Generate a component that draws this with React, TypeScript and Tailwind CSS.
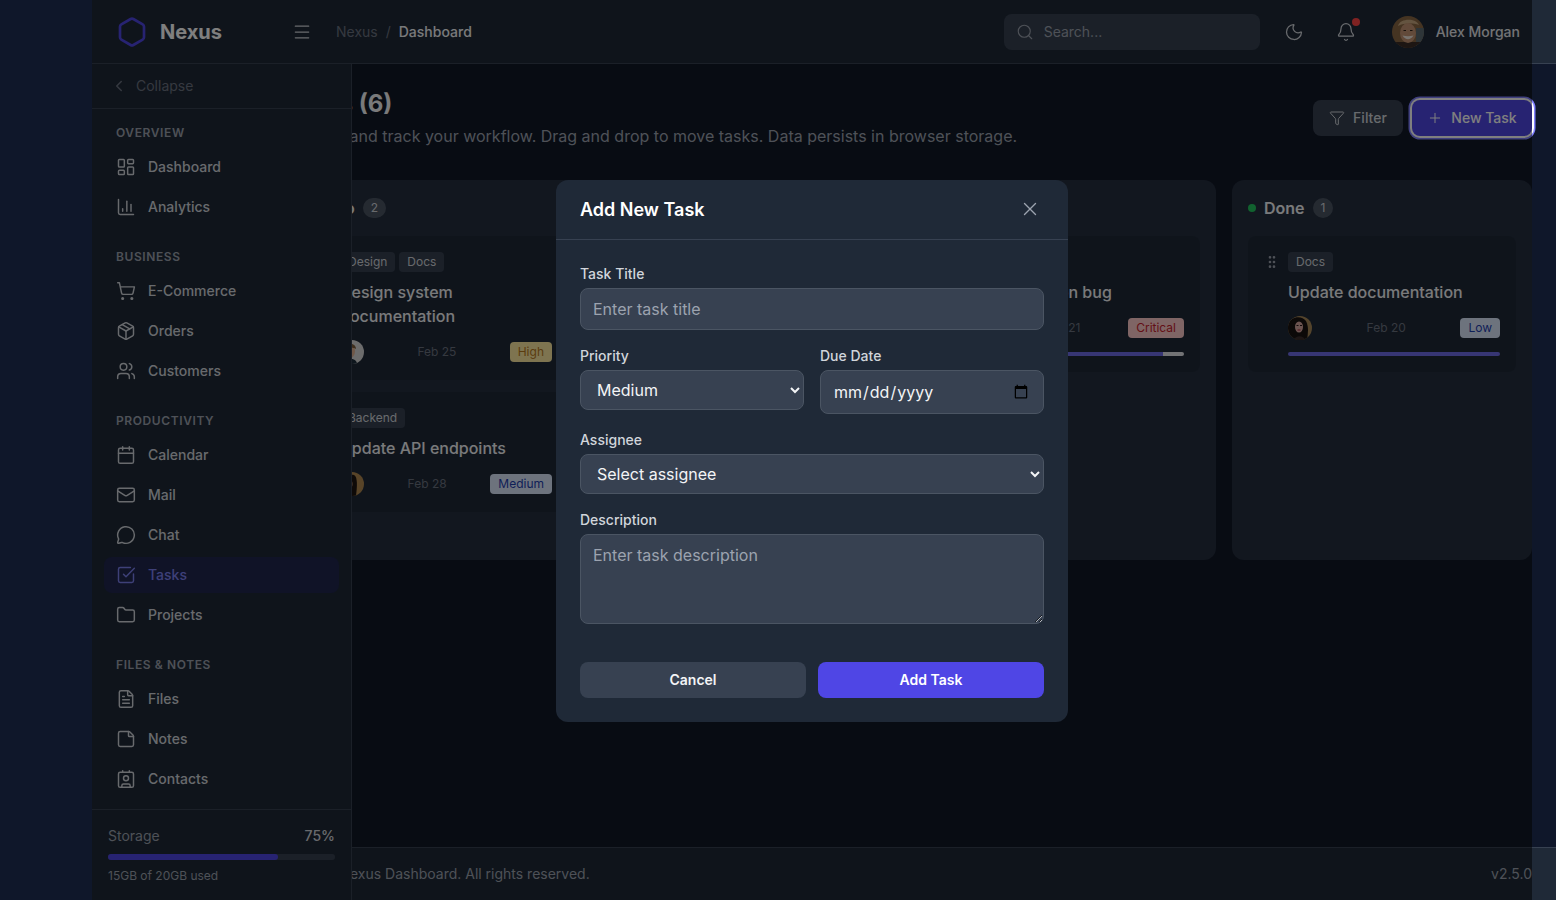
import { useState } from "react";
import {
  Bell,
  Calendar,
  ChartColumn,
  ChevronLeft,
  Contact,
  FileText,
  Folder,
  Funnel,
  GripVertical,
  Hexagon,
  LayoutDashboard,
  Mail,
  Menu,
  MessageCircle,
  Moon,
  Package,
  Plus,
  Search,
  ShoppingCart,
  SquareCheckBig,
  StickyNote,
  Users,
  X,
} from "lucide-react";

const navSections = [
  {
    title: "Overview",
    items: [
      { label: "Dashboard", icon: LayoutDashboard },
      { label: "Analytics", icon: ChartColumn },
    ],
  },
  {
    title: "Business",
    items: [
      { label: "E-Commerce", icon: ShoppingCart },
      { label: "Orders", icon: Package },
      { label: "Customers", icon: Users },
    ],
  },
  {
    title: "Productivity",
    items: [
      { label: "Calendar", icon: Calendar },
      { label: "Mail", icon: Mail },
      { label: "Chat", icon: MessageCircle },
      { label: "Tasks", icon: SquareCheckBig, active: true },
      { label: "Projects", icon: Folder },
    ],
  },
  {
    title: "Files & Notes",
    items: [
      { label: "Files", icon: FileText },
      { label: "Notes", icon: StickyNote },
      { label: "Contacts", icon: Contact },
    ],
  },
];

type Priority = "Low" | "Medium" | "High" | "Critical";

interface Task {
  title: string;
  tags: string[];
  date: string;
  priority: Priority;
  person: "man" | "woman" | "curly";
  progress?: number;
}

const priorityClass: Record<Priority, string> = {
  Low: "bg-[#dbe7fb] text-[#1e40af]",
  Medium: "bg-[#dbe7fb] text-[#1e40af]",
  High: "bg-[#fde9a0] text-[#b7791f]",
  Critical: "bg-[#fecaca] text-[#c81e2e]",
};

const columns: { title: string; dot: string; tasks: Task[] }[] = [
  {
    title: "Todo",
    dot: "bg-[#f59e0b]",
    tasks: [
      { title: "Design system documentation", tags: ["Design", "Docs"], date: "Feb 25", priority: "High", person: "man" },
      { title: "Update API endpoints", tags: ["Backend"], date: "Feb 28", priority: "Medium", person: "curly" },
    ],
  },
  {
    title: "In Progress",
    dot: "bg-[#6366f1]",
    tasks: [
      { title: "Build dashboard widgets", tags: ["Frontend"], date: "Feb 24", priority: "High", person: "man", progress: 60 },
    ],
  },
  {
    title: "Review",
    dot: "bg-[#ef4444]",
    tasks: [
      { title: "Fix navigation bug", tags: ["Bug"], date: "Feb 21", priority: "Critical", person: "man", progress: 90 },
    ],
  },
  {
    title: "Done",
    dot: "bg-[#22c55e]",
    tasks: [
      { title: "Update documentation", tags: ["Docs"], date: "Feb 20", priority: "Low", person: "woman", progress: 100 },
    ],
  },
];

function HostAvatar() {
  return (
    <svg viewBox="0 0 32 32" className="size-8 shrink-0 rounded-full">
      <rect width="32" height="32" fill="#8a6844" />
      <rect x="24" y="12" width="8" height="20" fill="#5c6a70" />
      <rect y="26" width="32" height="6" fill="#3a2c26" />
      <path d="M6 10C8 2 24 2 27 9c-6-2-15-2-21 1z" fill="#c8a880" />
      <ellipse cx="16" cy="17" rx="8" ry="10" fill="#c49474" />
      <path d="M10.5 19.5c3 5 8 5 11 0-4 1-7 1-11 0z" fill="#f0e6dc" />
      <path d="M11.5 14.5h2.5M18 14.5h2.5" stroke="#2e2018" strokeWidth="1.2" />
    </svg>
  );
}

function TaskAvatar({ person }: { person: Task["person"] }) {
  if (person === "man") {
    return (
      <svg viewBox="0 0 24 24" className="size-6 shrink-0 rounded-full">
        <rect width="24" height="24" fill="#d8d8d8" />
        <path d="M3 24c0-7 14-7 14 0z" fill="#1c2c3a" />
        <path d="M9 18h3l-1 6z" fill="#58a8c8" />
        <ellipse cx="10" cy="11" rx="5" ry="7" fill="#e0b090" />
        <path d="M4 9c0-7 12-7 12 0-3-2-9-2-12 0z" fill="#7a5a38" />
      </svg>
    );
  }
  if (person === "curly") {
    return (
      <svg viewBox="0 0 24 24" className="size-6 shrink-0 rounded-full">
        <rect width="24" height="24" fill="#b08850" />
        <path d="M3 24C0 8 8 1 14 3c4 2 3 12 2 21z" fill="#1c1410" />
        <ellipse cx="9" cy="12" rx="3.5" ry="5" fill="#c89878" />
      </svg>
    );
  }
  return (
    <svg viewBox="0 0 24 24" className="size-6 shrink-0 rounded-full">
      <rect width="24" height="24" fill="#a88858" />
      <path d="M0 24V8C3 0 14-1 18 5c3 6 2 13 1 19z" fill="#181210" />
      <ellipse cx="11" cy="11" rx="4" ry="5.5" fill="#d8a8a0" />
      <path d="M6 24c1-5 10-5 11 0z" fill="#3a2c2a" />
      <path d="M9.5 14h3" stroke="#a02838" strokeWidth="1" />
      <path d="M8.5 9.5h2M12 9.5h2" stroke="#281818" strokeWidth="1" />
    </svg>
  );
}

function TaskCard({ task }: { task: Task }) {
  return (
    <div className="flex gap-2 rounded-lg bg-[#1f2937] p-4">
      <GripVertical className="mt-0.5 size-4 shrink-0 text-[#9ca3af]" />
      <div className="min-w-0 flex-1">
        <div className="mb-2 flex gap-1">
          {task.tags.map((tag) => (
            <span key={tag} className="h-5 rounded bg-[#374151] px-2 text-xs leading-5 text-[#d1d5db]">
              {tag}
            </span>
          ))}
        </div>
        <p className="mb-3 text-base font-medium text-[#f3f4f6]">{task.title}</p>
        <div className="flex items-center justify-between">
          <TaskAvatar person={task.person} />
          <span className="text-xs text-[#6b7280]">{task.date}</span>
          <span className={`h-5 rounded px-2 text-xs leading-5 ${priorityClass[task.priority]}`}>{task.priority}</span>
        </div>
        {task.progress !== undefined && (
          <div className="mt-3 h-1 overflow-hidden rounded-sm bg-[#e5e7eb]">
            <div className="h-full bg-[#6f6ce8]" style={{ width: `${task.progress}%` }} />
          </div>
        )}
      </div>
    </div>
  );
}

function Sidebar() {
  return (
    <aside className="relative z-10 flex w-[260px] shrink-0 flex-col border-r border-[#374151] bg-[#1f2937]">
      <div className="flex h-[45px] items-center gap-2 border-b border-[#374151] pl-[18px] text-sm text-[#6b7280]">
        <ChevronLeft className="size-[18px]" strokeWidth={2} />
        <span>Collapse</span>
      </div>
      <nav className="flex-1 px-3 pt-[15px]">
        {navSections.map((section) => (
          <div key={section.title} className="mb-[23px] flex flex-col gap-1 last:mb-0">
            <h3 className="mb-[3px] px-3 text-xs leading-[18px] font-semibold tracking-[0.05em] text-[#9ca3af] uppercase">
              {section.title}
            </h3>
            {section.items.map((item) => {
              const Icon = item.icon;
              return (
                <a
                  key={item.label}
                  className={`flex h-9 items-center gap-3 rounded-lg px-3 text-sm font-medium ${
                    item.active ? "bg-[#20264e] text-[#7c80f0]" : "text-[#d1d5db]"
                  }`}
                >
                  <Icon className="size-5" strokeWidth={1.75} />
                  {item.label}
                </a>
              );
            })}
          </div>
        ))}
      </nav>
      <div className="border-t border-[#374151] p-4">
        <div className="mb-2 flex items-center justify-between text-sm">
          <span className="text-[#9ca3af]">Storage</span>
          <span className="font-medium text-[#d1d5db]">75%</span>
        </div>
        <div className="h-1.5 rounded-full bg-[#374151]">
          <div className="h-full w-3/4 rounded-full bg-[#4f46e5]" />
        </div>
        <p className="mt-2 text-xs text-[#9ca3af]">15GB of 20GB used</p>
      </div>
    </aside>
  );
}

function AddTaskModal() {
  const [title, setTitle] = useState("");
  const [description, setDescription] = useState("");
  const fieldClass = "w-full rounded-lg border border-[#4b5563] bg-[#374151] px-3 text-base text-[#f3f4f6] outline-none";

  return (
    <div className="w-[512px] rounded-xl bg-[#1f2937]">
      <div className="flex h-[60px] items-center justify-between border-b border-[#374151] pr-[27px] pl-6">
        <h2 className="text-lg font-semibold text-white">Add New Task</h2>
        <X className="mb-0.5 size-[22px] text-[#9ca3af]" strokeWidth={1.5} />
      </div>
      <form className="p-6">
        <label className="mb-1 block text-sm font-medium text-[#d1d5db]">Task Title</label>
        <input
          value={title}
          onChange={(e) => setTitle(e.target.value)}
          placeholder="Enter task title"
          className={`${fieldClass} mb-4 h-[42px] placeholder:text-[#9ca3af]`}
        />
        <div className="mb-4 grid grid-cols-2 items-start gap-4">
          <div>
            <label className="mb-1 block text-sm font-medium text-[#d1d5db]">Priority</label>
            <select defaultValue="Medium" className={`${fieldClass} h-10`}>
              <option>Low</option>
              <option>Medium</option>
              <option>High</option>
            </select>
          </div>
          <div>
            <label className="mb-1 block text-sm font-medium text-[#d1d5db]">Due Date</label>
            <input type="date" className={`${fieldClass} h-11`} />
          </div>
        </div>
        <label className="mb-1 block text-sm font-medium text-[#d1d5db]">Assignee</label>
        <select className={`${fieldClass} mb-4 h-10`}>
          <option>Select assignee</option>
        </select>
        <label className="mb-1 block text-sm font-medium text-[#d1d5db]">Description</label>
        <textarea
          value={description}
          onChange={(e) => setDescription(e.target.value)}
          placeholder="Enter task description"
          className={`${fieldClass} block h-[90px] py-2 placeholder:text-[#9ca3af]`}
        />
        <div className="mt-[38px] flex gap-3">
          <button type="button" className="h-9 flex-1 rounded-lg bg-[#374151] text-sm font-semibold text-[#f3f4f6]">
            Cancel
          </button>
          <button type="button" className="h-9 flex-1 rounded-lg bg-[#4f46e5] text-sm font-semibold text-white">
            Add Task
          </button>
        </div>
      </form>
    </div>
  );
}

export default function App() {
  return (
    <div className="flex h-[900px] w-[1556px] overflow-hidden bg-[#0f172a] font-['Inter',sans-serif]">
      <div className="w-[92px] shrink-0" />

      <div className="relative flex w-[1440px] shrink-0 flex-col bg-[#111827]">
        {/* header */}
        <header className="flex h-16 shrink-0 items-center border-b border-[#374151] bg-[#1f2937] pr-3">
          <div className="flex w-[200px] items-center gap-3 pl-6">
            <Hexagon className="size-8 text-[#4f46e5]" strokeWidth={2} />
            <span className="text-xl font-bold text-white">Nexus</span>
          </div>
          <Menu className="mr-6 size-5 text-[#d1d5db]" strokeWidth={1.5} />
          <div className="flex items-center gap-2 text-sm">
            <span className="text-[#6b7280]">Nexus</span>
            <span className="text-[#6b7280]">/</span>
            <span className="font-medium text-[#f3f4f6]">Dashboard</span>
          </div>
          <div className="ml-auto flex h-9 w-64 items-center gap-2 rounded-lg bg-[#374151] pl-3 text-sm text-[#9ca3af]">
            <Search className="size-[18px]" strokeWidth={1.5} />
            <span className="ml-0.5">Search...</span>
          </div>
          <Moon className="ml-6 size-5 text-[#d1d5db]" strokeWidth={1.5} />
          <div className="relative ml-8">
            <Bell className="size-5 text-[#d1d5db]" strokeWidth={1.5} />
            <span className="absolute -top-1 -right-1 size-2 rounded-full bg-[#ff4444]" />
          </div>
          <div className="ml-9 flex items-center gap-3">
            <HostAvatar />
            <span className="text-sm font-medium text-[#e5e7eb]">Alex Morgan</span>
          </div>
        </header>

        <div className="flex min-h-0 flex-1">
          <Sidebar />

          <div className="flex min-w-0 flex-1 flex-col">
            <main className="-ml-[92px] flex-1 pt-[26px] pl-6">
              <div className="mb-8 flex items-start justify-between">
                <div>
                  <h1 className="text-2xl leading-7 font-bold text-[#f3f4f6]">Tasks (6)</h1>
                  <p className="mt-1.5 text-base text-[#9ca3af]">
                    Manage and track your workflow. Drag and drop to move tasks. Data persists in browser storage.
                  </p>
                </div>
                <div className="mt-2.5 flex gap-[9px]">
                  <button className="flex h-9 w-[90px] items-center justify-center gap-2 rounded-lg bg-[#374151] text-sm font-medium text-[#d1d5db]">
                    <Funnel className="size-4" strokeWidth={1.5} />
                    Filter
                  </button>
                  <button className="flex h-9 w-[120px] items-center justify-center gap-2 rounded-lg bg-[#4f46e5] text-sm font-medium text-white shadow-[0_0_0_2px_#fff,0_0_0_3.5px_#8080ff]">
                    <Plus className="size-4" strokeWidth={1.5} />
                    New Task
                  </button>
                </div>
              </div>

              <div className="flex gap-4">
                {columns.map((column) => (
                  <section key={column.title} className="h-[380px] w-[300px] shrink-0 rounded-xl bg-[#242e3e] p-4">
                    <div className="mb-4 flex h-6 items-center gap-2">
                      <span className={`size-2 rounded-full ${column.dot}`} />
                      <h2 className="text-base font-semibold text-[#f3f4f6]">{column.title}</h2>
                      <span className="h-5 rounded-full bg-[#4b5563] px-2 text-xs leading-5 text-[#d1d5db]">
                        {column.tasks.length}
                      </span>
                    </div>
                    <div className="flex flex-col gap-3">
                      {column.tasks.map((task) => (
                        <TaskCard key={task.title} task={task} />
                      ))}
                    </div>
                  </section>
                ))}
              </div>
            </main>

            <footer className="-ml-[92px] flex h-[53px] shrink-0 items-center justify-between border-t border-[#374151] bg-[#1f2937] pl-6 text-sm text-[#9ca3af]">
              <span>© 2024 Nexus Dashboard. All rights reserved.</span>
              <span>v2.5.0</span>
            </footer>
          </div>
        </div>

        {/* modal backdrop */}
        <div className="absolute inset-0 z-20 flex items-center justify-center bg-black/50 pt-[2px]">
          <AddTaskModal />
        </div>
      </div>

      <div className="flex flex-1 flex-col">
        <div className="h-16 border-b border-[#374151] bg-[#1f2937]" />
        <div className="flex-1" />
        <div className="h-[53px] border-t border-[#374151] bg-[#1f2937]" />
      </div>
    </div>
  );
}
